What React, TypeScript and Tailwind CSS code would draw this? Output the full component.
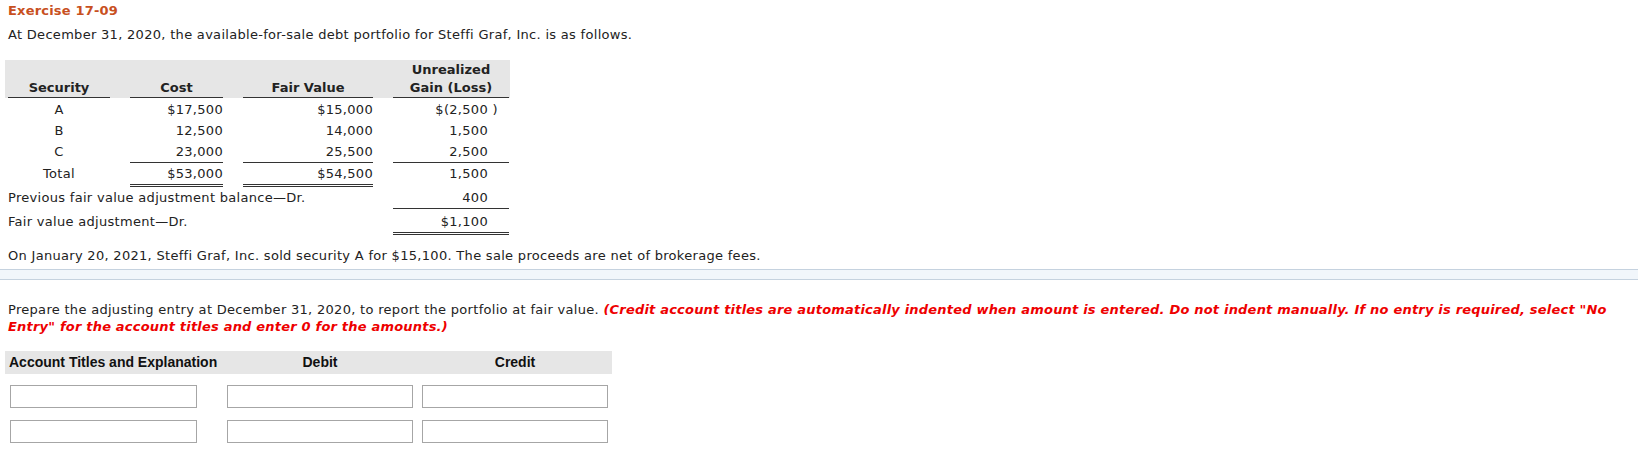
import React from "react";

type Row = {
  label: string;
  span?: boolean;
  cost?: string;
  fair?: string;
  gain: React.ReactNode;
  costLine?: "single" | "double";
  gainLine?: "single" | "double";
  pad?: string;
};

const rows: Row[] = [
  { label: "A", cost: "$17,500", fair: "$15,000", gain: <>$(2,500<span className="inline-block w-0 whitespace-pre"> )</span></> },
  { label: "B", cost: "12,500", fair: "14,000", gain: "1,500" },
  { label: "C", cost: "23,000", fair: "25,500", gain: "2,500", costLine: "single", gainLine: "single" },
  { label: "Total", cost: "$53,000", fair: "$54,500", gain: "1,500", costLine: "double" },
  { label: "Previous fair value adjustment balance\u2014Dr.", span: true, gain: "400", gainLine: "single" },
  { label: "Fair value adjustment\u2014Dr.", span: true, gain: "$1,100", gainLine: "double", pad: "pt-[2px]" },
];

function lineClass(kind?: "single" | "double") {
  if (kind === "single") return "border-b border-[#333]";
  if (kind === "double") return "border-b-[3px] border-double border-[#333]";
  return "";
}

function Portfolio() {
  return (
    <div className="ml-[5px] mt-[17px] w-[505px]">
      <div className="grid grid-cols-[102px_93px_130px_116px] gap-x-[20px] bg-[#e6e6e6] pl-[3px] pt-[1px] font-bold text-[13px] leading-[18px] tracking-normal items-end">
        <div className="border-b border-[#333] text-center">Security</div>
        <div className="border-b border-[#333] text-center">Cost</div>
        <div className="border-b border-[#333] text-center">Fair Value</div>
        <div className="border-b border-[#333] text-center">
          Unrealized
          <br />
          Gain (Loss)
        </div>
      </div>
      <div className="grid grid-cols-[102px_93px_130px_116px] gap-x-[20px] pl-[3px] pt-[1px] leading-[21px]">
        {rows.map((r) => (
          <React.Fragment key={r.label}>
            {r.span ? (
              <div className={`col-span-3 whitespace-nowrap ${r.pad ?? ""}`}>{r.label}</div>
            ) : (
              <>
                <div className="text-center">{r.label}</div>
                <div className={`text-right ${lineClass(r.costLine)}`}>{r.cost}</div>
                <div className={`text-right ${lineClass(r.costLine)}`}>{r.fair}</div>
              </>
            )}
            <div className={`text-right pr-[21px] ${r.pad ?? ""} ${lineClass(r.gainLine)}`}>{r.gain}</div>
          </React.Fragment>
        ))}
      </div>
    </div>
  );
}

function JournalEntry() {
  const inputs = [0, 1];
  return (
    <div className="ml-[5px] mt-[16px] w-[607px]">
      <div className="grid grid-cols-[207px_205px_195px] bg-[#e6e6e6] h-[23px] items-center font-['Liberation_Sans',Arial,sans-serif] font-bold text-[14px] tracking-normal text-[#111]">
        <div className="pl-[4px] whitespace-nowrap">Account Titles and Explanation</div>
        <div className="pl-[15px]">
          <div className="w-[186px] text-center">Debit</div>
        </div>
        <div className="pl-[5px]">
          <div className="w-[186px] text-center">Credit</div>
        </div>
      </div>
      <div className="mt-[11px] flex flex-col gap-[12px]">
        {inputs.map((i) => (
          <div key={i} className="grid grid-cols-[207px_205px_195px]">
            <div className="pl-[5px]">
              <input className="block h-[23px] w-[187px] border border-[#a6a6a6] bg-white outline-none" />
            </div>
            <div className="pl-[15px]">
              <input className="block h-[23px] w-[186px] border border-[#a6a6a6] bg-white outline-none" />
            </div>
            <div className="pl-[5px]">
              <input className="block h-[23px] w-[186px] border border-[#a6a6a6] bg-white outline-none" />
            </div>
          </div>
        ))}
      </div>
    </div>
  );
}

export default function App() {
  return (
    <div className="h-[459px] w-[1638px] overflow-hidden bg-white font-['DejaVu_Sans',Verdana,sans-serif] text-[13px] tracking-[0.3px] text-[#222]">
      <div className="pl-[8px] pt-[3px]">
        <h1 className="text-[13px] font-bold leading-[16px] tracking-[0.2px] text-[#c8501e]">Exercise 17-09</h1>
        <p className="mt-[8px] leading-[16px]">
          At December 31, 2020, the available-for-sale debt portfolio for Steffi Graf, Inc. is as follows.
        </p>
      </div>

      <Portfolio />

      <p className="mt-[13px] pl-[8px] leading-[16px]">
        On January 20, 2021, Steffi Graf, Inc. sold security A for $15,100. The sale proceeds are net of brokerage fees.
      </p>

      <div className="mt-[5px] h-[11px] border-y border-[#c5d2df] bg-[#f1f6fb]" />

      <p className="mt-[21px] w-[1630px] pl-[8px] leading-[17px]">
        Prepare the adjusting entry at December 31, 2020, to report the portfolio at fair value.{" "}
        <b className="italic tracking-[0.2px] text-[#ee0000]">
          (Credit account titles are automatically indented when amount is entered. Do not indent manually. If no entry
          is required, select "No Entry" for the account titles and enter 0 for the amounts.)
        </b>
      </p>

      <JournalEntry />
    </div>
  );
}
